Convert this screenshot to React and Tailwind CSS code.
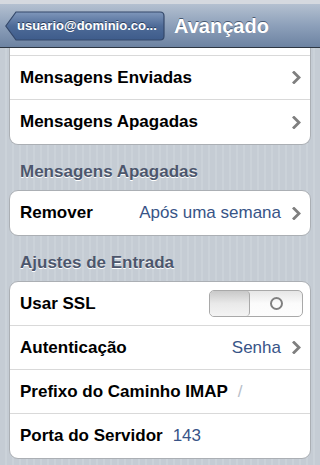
import React from 'react';

const font = { fontFamily: '"Liberation Sans", Arial, Helvetica, sans-serif' };

function Chevron() {
  return (
    <svg width="9" height="13" viewBox="0 0 9 13" className="shrink-0 ml-[11px]">
      <path d="M2 1.5 L7 6.5 L2 11.5" fill="none" stroke="#7f7f7f" strokeWidth="2.8" strokeLinecap="square" />
    </svg>
  );
}

function Row({ label, value, chevron, children, last, valueClass = 'text-[#385487]', inline, pr = 'pr-[9px]' }) {
  return (
    <div className={`h-[44px] flex items-center pl-[10px] ${pr} ${last ? '' : 'border-b border-[#d9d9d9]'}`}>
      <span className="font-bold text-[17px] text-black whitespace-nowrap">{label}</span>
      {inline ? (
        <span className={`ml-[10px] text-[17px] ${valueClass}`}>{value}</span>
      ) : (
        <div className="ml-auto flex items-center">
          {value && <span className={`text-[17px] ${valueClass}`}>{value}</span>}
          {children}
          {chevron && <Chevron />}
        </div>
      )}
    </div>
  );
}

function Card({ children, className = '' }) {
  return (
    <div className={`mx-[9px] bg-white border border-[#abafb4] rounded-[9px] overflow-hidden ${className}`}>
      {children}
    </div>
  );
}

function Header({ children }) {
  return (
    <div className="px-[20px] pt-[17px] pb-[8px] text-[17px] font-bold text-[#4c566c] [text-shadow:0_1px_0_#fff] leading-[20px]">
      {children}
    </div>
  );
}

function Toggle() {
  return (
    <div className="w-[94px] h-[27px] flex rounded-[5px] border border-[#a9a9a9] overflow-hidden bg-gradient-to-b from-[#e6e6e6] via-[#fbfbfb] to-[#fdfdfd]">
      <div className="w-[40px] h-full bg-gradient-to-b from-[#c9c9c9] via-[#e9e9e9] to-[#f4f4f4] border-r border-[#a9a9a9] rounded-[4px]" />
      <div className="flex-1 flex items-center justify-center">
        <div className="w-[13px] h-[13px] rounded-full border-[2px] border-[#808080]" />
      </div>
    </div>
  );
}

export default function App() {
  return (
    <div
      className="w-[320px] h-[465px] overflow-hidden flex flex-col bg-[repeating-linear-gradient(90deg,#c5ccd4_0px,#c5ccd4_5px,#cbd2d9_5px,#cbd2d9_7px)]"
      style={font}
    >
      <div className="h-[4px] bg-[#d5d9df] shrink-0" />
      <div className="h-[44px] shrink-0 flex items-center px-[5px] bg-gradient-to-b from-[#b4c0d0] via-[#8da0ba] to-[#6d83a2] border-b border-[#2d3642]">
        <div className="relative h-[30px] w-[160px] flex items-center">
          <svg width="160" height="30" viewBox="0 0 160 30" className="absolute inset-0">
            <defs>
              <linearGradient id="bb" x1="0" y1="0" x2="0" y2="1">
                <stop offset="0" stopColor="#7f97bb" />
                <stop offset="0.5" stopColor="#4e6b98" />
                <stop offset="1" stopColor="#3e5c8b" />
              </linearGradient>
            </defs>
            <path d="M0.8 15 L11 1 H155 Q159 1 159 5 V25 Q159 29 155 29 H11 Z" fill="url(#bb)" stroke="#34486a" strokeWidth="1.2" />
          </svg>
          <span className="relative pl-[12px] text-[13px] font-bold text-white [text-shadow:0_-1px_0_#2c3e5c] whitespace-nowrap">
            usuario@dominio.co...
          </span>
        </div>
        <span className="ml-[9px] text-[20px] font-bold text-white [text-shadow:0_-1px_0_#4a5a72]">Avançado</span>
      </div>

      <div className="flex-1 overflow-hidden">
        <Card className="rounded-t-none border-t-0">
          <div className="h-[8px] border-b border-[#d9d9d9]" />
          <Row label="Mensagens Enviadas" chevron />
          <Row label="Mensagens Apagadas" chevron last />
        </Card>

        <Header>Mensagens Apagadas</Header>
        <Card>
          <Row label="Remover" value="Após uma semana" chevron last />
        </Card>

        <Header>Ajustes de Entrada</Header>
        <Card>
          <Row label="Usar SSL" pr="pr-[7px]">
            <Toggle />
          </Row>
          <Row label="Autenticação" value="Senha" chevron />
          <Row label="Prefixo do Caminho IMAP" value="/" inline valueClass="text-[#b7bec9]" />
          <Row label="Porta do Servidor" value="143" inline last />
        </Card>
      </div>
    </div>
  );
}
